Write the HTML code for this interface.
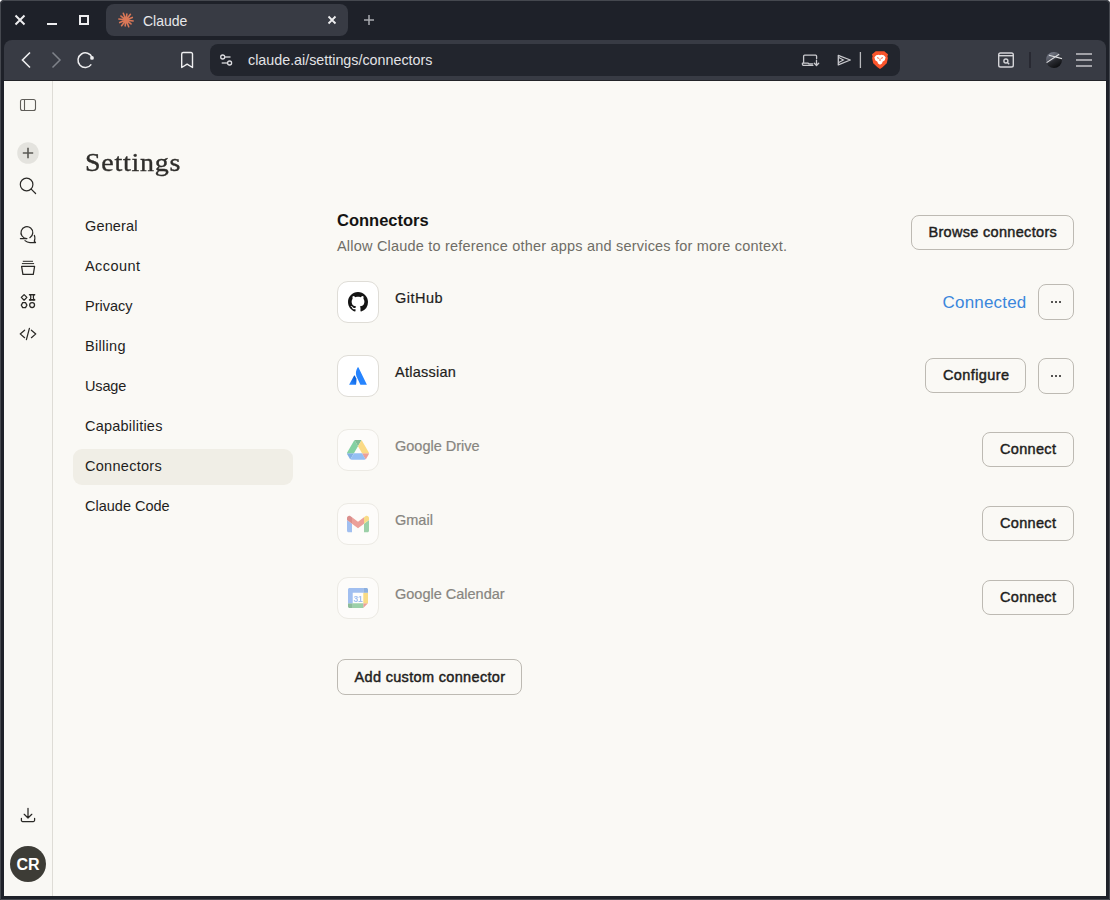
<!DOCTYPE html>
<html><head><meta charset="utf-8">
<style>
*{box-sizing:border-box;margin:0;padding:0}
html,body{width:1110px;height:900px;overflow:hidden;background:#ffffff;font-family:"Liberation Sans",sans-serif}
.a{position:absolute}
.t{position:absolute;white-space:nowrap;line-height:1}
#win{position:absolute;left:0;top:0;width:1110px;height:900px;background:#1e2129;border-radius:4px 4px 0 0;overflow:hidden}
#winb{position:absolute;left:0;top:0;width:1110px;height:900px;border:1px solid #45484f;border-radius:4px 4px 0 0}
#tab{position:absolute;left:106px;top:4px;width:242px;height:32px;background:#383b44;border-radius:8px}
#toolbar{position:absolute;left:4px;top:40px;width:1102px;height:40px;background:#383b44;border-radius:8px 8px 0 0}
#url{position:absolute;left:210px;top:44px;width:690px;height:32px;background:#22252d;border-radius:8px}
#content{position:absolute;left:4px;top:80px;width:1102px;height:816px;background:#faf9f5;overflow:hidden}
#side{position:absolute;left:0;top:0;width:49px;height:816px;background:#f9f8f4;border-right:1px solid #dedcd6}
.nav{position:absolute;left:81px;font-size:14.5px;color:#1f1e1d}
.btn{position:absolute;border:1px solid #bdbab3;border-radius:8px;font-size:14.5px;color:#1f1e1d;-webkit-text-stroke:0.45px #1f1e1d}
.btn span{position:absolute;white-space:nowrap;line-height:1}
.ico{position:absolute;left:333px;width:42px;height:42px;border:1px solid #dfddd7;border-radius:11px;background:#ffffff}
.ico.f{background:#fdfcfa;border-color:#eceae4}
.name{position:absolute;left:391px;font-size:14.5px;color:#1f1e1d;white-space:nowrap;line-height:1;-webkit-text-stroke:0.2px currentColor}
.dim{color:#878580}
.dots{position:absolute;left:11.8px;top:16.1px;width:11px;height:3px}
.dots i{position:absolute;top:0;width:2.2px;height:2.2px;background:#1f1e1d;border-radius:50%}
#ov{position:absolute;left:0;top:0;width:1110px;height:900px}
</style></head><body>
<div id="win">
  <div id="tab"></div>
  <div id="toolbar"></div>
  <div id="url"></div>
  <div class="t" style="left:143px;top:13.5px;font-size:14px;color:#e8e8ea">Claude</div>
  <div class="t" style="left:248px;top:53px;font-size:14.3px;color:#e3e3e6">claude.ai/settings/connectors</div>
</div>
<div id="content">
  <div id="side"></div>
  <div class="a" style="left:0;top:0;width:1102px;height:1px;background:#232428"></div>
  <div class="t" style="left:81px;top:70px;font-family:'Liberation Serif',serif;font-size:28px;letter-spacing:0.75px;-webkit-text-stroke:0.4px #2f2e2b;color:#2f2e2b;transform:scaleY(0.92);transform-origin:0 0">Settings</div>
  <div class="a" style="left:69px;top:369px;width:220px;height:36px;background:#f0eee6;border-radius:9px"></div>
  <div class="nav t" style="top:139px;letter-spacing:0.15px">General</div>
  <div class="nav t" style="top:179px;letter-spacing:0.45px">Account</div>
  <div class="nav t" style="top:219px">Privacy</div>
  <div class="nav t" style="top:259px;letter-spacing:0.3px">Billing</div>
  <div class="nav t" style="top:299px;letter-spacing:-0.15px">Usage</div>
  <div class="nav t" style="top:339px;letter-spacing:0.22px">Capabilities</div>
  <div class="nav t" style="top:379px;letter-spacing:0.28px">Connectors</div>
  <div class="nav t" style="top:419px">Claude Code</div>

  <div class="t" style="left:333px;top:132px;font-size:16.5px;font-weight:bold;color:#141413">Connectors</div>
  <div class="t" style="left:333px;top:159px;font-size:14.5px;color:#6f6d66;letter-spacing:0.2px">Allow Claude to reference other apps and services for more context.</div>
  <div class="btn" style="left:907px;top:135px;width:163px;height:35px"><span style="left:16.5px;top:8.5px;letter-spacing:0.31px">Browse connectors</span></div>

  <div class="ico" style="top:201px"></div>
  <div class="name" style="top:211px;letter-spacing:0.5px">GitHub</div>
  <div class="t" style="left:938.5px;top:213.5px;font-size:17px;letter-spacing:0.2px;color:#3a87dc">Connected</div>
  <div class="btn" style="left:1034px;top:204px;width:36px;height:36px"><div class="dots"><i style="left:0"></i><i style="left:4.2px"></i><i style="left:8.5px"></i></div></div>

  <div class="ico" style="top:275px"></div>
  <div class="name" style="top:285px;letter-spacing:0.25px">Atlassian</div>
  <div class="btn" style="left:921px;top:278px;width:101px;height:35px"><span style="left:17px;top:8.5px;letter-spacing:0.4px">Configure</span></div>
  <div class="btn" style="left:1034px;top:278px;width:36px;height:36px"><div class="dots"><i style="left:0"></i><i style="left:4.2px"></i><i style="left:8.5px"></i></div></div>

  <div class="ico f" style="top:349px"></div>
  <div class="name dim" style="top:359px">Google Drive</div>
  <div class="btn" style="left:978px;top:352px;width:92px;height:35px"><span style="left:17px;top:8.5px;letter-spacing:0.32px">Connect</span></div>

  <div class="ico f" style="top:423px"></div>
  <div class="name dim" style="top:433px">Gmail</div>
  <div class="btn" style="left:978px;top:426px;width:92px;height:35px"><span style="left:17px;top:8.5px;letter-spacing:0.32px">Connect</span></div>

  <div class="ico f" style="top:497px"></div>
  <div class="name dim" style="top:507px">Google Calendar</div>
  <div class="btn" style="left:978px;top:500px;width:92px;height:35px"><span style="left:17px;top:8.5px;letter-spacing:0.32px">Connect</span></div>

  <div class="btn" style="left:333px;top:579px;width:185px;height:36px"><span style="left:16.5px;top:9.5px;letter-spacing:0.33px">Add custom connector</span></div>
  <div class="a" style="left:6px;top:766px;width:36px;height:36px;border-radius:50%;background:#3d3c36"></div>
  <div class="t" style="left:12px;top:777px;width:24px;text-align:center;font-size:16px;font-weight:bold;color:#ffffff">CR</div>
</div>
<div id="winb"></div>
<svg id="ov" width="1110" height="900" viewBox="0 0 1110 900">
  <!-- window controls -->
  <g stroke="#eeeef0" stroke-width="2" fill="none">
    <path d="M15.5 15.5L24.5 24.5M24.5 15.5L15.5 24.5"/>
    <path d="M47 24L57 24"/>
    <rect x="80" y="16" width="8" height="8"/>
  </g>
  <!-- claude favicon -->
  <path stroke="#d97757" stroke-width="1.6" stroke-linecap="round" d="M127.49 20.21L133.13 21.00M127.18 20.92L131.04 23.94M126.56 21.39L128.70 26.68M125.79 21.49L125.16 25.94M125.08 21.18L121.57 25.67M124.61 20.56L119.70 22.55M124.51 19.79L118.87 19.00M124.82 19.08L120.96 16.06M125.44 18.61L123.30 13.32M126.21 18.51L126.84 14.06M126.92 18.82L130.43 14.33M127.39 19.44L132.30 17.45"/>
  <circle cx="126" cy="20" r="2.2" fill="#d97757"/>
  <!-- tab close / new tab -->
  <path d="M328.5 16.5L335.5 23.5M335.5 16.5L328.5 23.5" stroke="#eeeef0" stroke-width="1.8"/>
  <path d="M364 20L374 20M369 15L369 25" stroke="#a9abb0" stroke-width="1.5"/>
  <!-- nav -->
  <path d="M30 52.5L22.5 60L30 67.5" stroke="#eeeef0" stroke-width="1.6" fill="none"/>
  <path d="M52.5 52.5L60 60L52.5 67.5" stroke="#7f828a" stroke-width="1.5" fill="none"/>
  <path d="M92.16 57.7A7.3 7.3 0 1 0 91.28 64.39" stroke="#eeeef0" stroke-width="1.5" fill="none"/>
  <circle cx="92.0" cy="57.9" r="1.9" fill="#eeeef0"/>
  <!-- bookmark -->
  <path d="M181.7 54A1.5 1.5 0 0 1 183.2 52.5H191A1.5 1.5 0 0 1 192.5 54V67.5L187.1 64.2L181.7 67.5Z" stroke="#eeeef0" stroke-width="1.4" fill="none" stroke-linejoin="round"/>
  <!-- tune -->
  <g stroke="#dcdce0" stroke-width="1.3" fill="none">
    <circle cx="222.7" cy="57" r="2"/><path d="M224.9 57H230.5"/>
    <circle cx="229.6" cy="63" r="2"/><path d="M221.7 63H227.4"/>
  </g>
  <!-- install -->
  <g stroke="#c9c9cd" stroke-width="1.3" fill="none" stroke-linecap="round" stroke-linejoin="round">
    <path d="M803.6 62.6V56.2A1 1 0 0 1 804.6 55.2H815.6A1 1 0 0 1 816.6 56.2V58.4"/>
    <path d="M813 65.3H803.6A1.2 1.2 0 0 1 802.4 64.1V63.2H808.2L808.8 63.8H812.6"/>
    <path d="M816.5 60.2V65.4M814.3 63.3L816.5 65.5L818.7 63.3"/>
  </g>
  <!-- send -->
  <path d="M838.3 55.3L850.3 60L838.3 64.9Z" stroke="#c9c9cd" stroke-width="1.3" fill="none" stroke-linejoin="round"/>
  <path d="M838.8 57.6L843.4 60L838.8 62.5" stroke="#c9c9cd" stroke-width="1.1" fill="none"/>
  <path d="M860.4 52V68" stroke="#b8b8bc" stroke-width="1.3"/>
  <!-- brave lion -->
  <path d="M875.8 51.3H884.3L886.3 53L888 54.2L887.4 56.5L887.9 58L886.8 63.2L882.5 67.2L880 68.9L877.5 67.2L873.2 63.2L872.1 58L872.6 56.5L872 54.2L873.7 53Z" fill="#fb542b"/>
  <path d="M876.2 55.2L878.8 54.7L880 55.3L881.2 54.7L883.8 55.2L885.6 57.3L884.8 60.3L882.6 61.7L882 63.6L880 64.8L878 63.6L877.4 61.7L875.2 60.3L874.4 57.3Z" fill="#ffffff"/>
  <path d="M877 57.6L879 58.4M883 57.6L881 58.4M880 58.5V61" stroke="#fb542b" stroke-width="0.9"/>
  <!-- search tabs -->
  <g stroke="#d4d4d8" stroke-width="1.4" fill="none">
    <rect x="998.7" y="53" width="14.6" height="14" rx="1.8"/>
    <path d="M998.7 55.7H1013.3"/>
    <circle cx="1005.9" cy="61" r="2"/><path d="M1007.4 62.5L1009.2 64.2"/>
  </g>
  <path d="M1030 52V68" stroke="#23252c" stroke-width="1.5"/>
  <!-- globe avatar -->
  <defs>
    <linearGradient id="gl" x1="0.1" y1="0.1" x2="0.6" y2="1">
      <stop offset="0" stop-color="#7a7e8c"/><stop offset="0.42" stop-color="#50535d"/><stop offset="0.55" stop-color="#2a2c32"/><stop offset="1" stop-color="#0e0f12"/>
    </linearGradient>
  </defs>
  <circle cx="1054" cy="60" r="8" fill="url(#gl)"/>
  <path d="M1046.6 62.6L1059.1 54.3M1048.9 55.3L1062 58.6" stroke="#dcdde0" stroke-width="1.1"/>
  <!-- hamburger -->
  <path d="M1076 54H1092M1076 60H1092M1076 66H1092" stroke="#c3c4c8" stroke-width="1.7"/>

  <!-- sidebar icons -->
  <g stroke="#5f5d58" stroke-width="1.1" fill="none">
    <rect x="20.5" y="99.5" width="15" height="11" rx="2"/>
    <path d="M24.5 99.5V110.5"/>
  </g>
  <circle cx="28" cy="153" r="10.8" fill="#e4e3de"/>
  <path d="M22.8 153H33.2M28 147.8V158.2" stroke="#5a5954" stroke-width="1.6"/>
  <g stroke="#2a2926" stroke-width="1.2" fill="none" stroke-linecap="round">
    <circle cx="26.6" cy="184.5" r="6.3"/><path d="M31.2 189.1L35.6 193.5"/>
  </g>
  <g stroke="#2a2926" stroke-width="1.25" fill="none" stroke-linejoin="round" stroke-linecap="round">
    <path d="M20.4 238.5H26.9A5.9 5.9 0 1 1 29.85 237.7"/>
    <path d="M25 240.6C26.5 242 28 242.5 30 242.5H35.5L34.3 241.3C35 240 35 236.7 34.4 235.4"/>
    <path d="M23.2 261.3H32.6M22.3 263.6H33.7" stroke-width="1"/>
    <path d="M21.6 266.3H34.6L33.3 274.4H22.9Z"/>
    <path d="M24.1 294.6L26.9 297.4L24.1 300.2L21.3 297.4Z"/>
    <path d="M29.6 294.7H34.6M29.6 299.9H34.6" stroke-width="1.6"/><path d="M30.4 294.7C31.1 296.5 31.1 298.1 30.4 299.9M33.8 294.7C33.1 296.5 33.1 298.1 33.8 299.9"/>
    <path d="M22.7 302.6H25.5L26.9 305.1L25.5 307.6H22.7L21.3 305.1Z"/>
    <circle cx="32.1" cy="305.1" r="2.45"/>
    <path d="M24.6 330.2L20.2 333.9L24.6 337.7M31.4 330.2L35.8 333.9L31.4 337.7M29.4 328.4L26.4 339.6"/>
    <path d="M28 808.3V818M24.2 814.3L28 818L31.8 814.3M21.4 818.3V820.3A1.2 1.2 0 0 0 22.6 821.5H33.4A1.2 1.2 0 0 0 34.6 820.3V818.3"/>
  </g>

  <!-- github -->
  <g transform="translate(348 292) scale(1.25)">
    <path fill="#141414" d="M8 0C3.58 0 0 3.58 0 8c0 3.54 2.29 6.53 5.47 7.59.4.07.55-.17.55-.38 0-.19-.01-.82-.01-1.49-2.01.37-2.53-.49-2.69-.94-.09-.23-.48-.94-.82-1.13-.28-.15-.68-.52-.01-.53.63-.01 1.08.58 1.23.82.72 1.21 1.87.87 2.33.66.07-.52.28-.87.51-1.07-1.78-.2-3.64-.89-3.64-3.95 0-.87.31-1.59.82-2.15-.08-.2-.36-1.02.08-2.12 0 0 .67-.21 2.2.82.64-.18 1.32-.27 2-.27.68 0 1.36.09 2 .27 1.53-1.04 2.2-.82 2.2-.82.44 1.1.16 1.92.08 2.12.51.56.82 1.27.82 2.15 0 3.07-1.87 3.75-3.65 3.95.29.25.54.73.54 1.48 0 1.07-.01 1.93-.01 2.2 0 .21.15.46.55.38A8.013 8.013 0 0016 8c0-4.42-3.58-8-8-8z"/>
  </g>
  <!-- atlassian -->
  <defs>
    <linearGradient id="at" x1="0.9" y1="0" x2="0.3" y2="1">
      <stop offset="0" stop-color="#0052cc"/><stop offset="0.9" stop-color="#2684ff"/>
    </linearGradient>
  </defs>
  <path d="M354 375.8C354.3 375.4 354.8 375.5 355 375.9L356.2 378.3C356.6 379.6 356.6 381.5 356 384.8H349.1Z" fill="url(#at)"/>
  <path d="M357.6 367.6C357.8 367.2 358.3 367.2 358.5 367.6L366.9 384.8H360.4L356.4 376.2C355.5 373.5 355.8 370.5 357.6 367.6Z" fill="#2684ff"/>
  <!-- drive -->
  <g transform="translate(347 440) scale(0.252)" opacity="0.5" style="filter:saturate(0.9)">
    <path d="m6.6 66.85 3.85 6.65c.8 1.4 1.95 2.5 3.3 3.3l13.75-23.8h-27.5c0 1.55.4 3.1 1.2 4.5z" fill="#0066da"/>
    <path d="m43.65 25-13.75-23.8c-1.35.8-2.5 1.9-3.3 3.3l-25.4 44a9.06 9.06 0 0 0 -1.2 4.5h27.5z" fill="#00ac47"/>
    <path d="m73.55 76.8c1.35-.8 2.5-1.9 3.3-3.3l1.6-2.75 7.65-13.25c.8-1.4 1.2-2.95 1.2-4.5h-27.502l5.852 11.5z" fill="#ea4335"/>
    <path d="m43.65 25 13.75-23.8c-1.35-.8-2.9-1.2-4.5-1.2h-18.5c-1.6 0-3.15.45-4.5 1.2z" fill="#00832d"/>
    <path d="m59.8 53h-32.3l-13.75 23.8c1.35.8 2.9 1.2 4.5 1.2h50.8c1.6 0 3.15-.45 4.5-1.2z" fill="#2684fc"/>
    <path d="m73.4 26.5-12.7-22c-.8-1.4-1.95-2.5-3.3-3.3l-13.75 23.8 16.15 28h27.45c0-1.55-.4-3.1-1.2-4.5z" fill="#ffba00"/>
  </g>
  <!-- gmail -->
  <g transform="translate(347 515.8) scale(0.25) translate(-52 -42)" opacity="0.5" style="filter:saturate(0.9)">
    <path fill="#4285f4" d="M58 108h14V74L52 59v43c0 3.32 2.69 6 6 6"/>
    <path fill="#34a853" d="M120 108h14c3.32 0 6-2.69 6-6V59l-20 15"/>
    <path fill="#fbbc04" d="M120 48v26l20-15v-8c0-7.42-8.47-11.650-14.4-7.2"/>
    <path fill="#ea4335" d="M72 74V48l24 18 24-18v26L96 92"/>
    <path fill="#c5221f" d="M52 51v8l20 15V48l-5.6-4.2c-5.94-4.45-14.4-.22-14.4 7.2"/>
  </g>
  <!-- calendar -->
  <g transform="translate(348 588) scale(0.1)" opacity="0.5" style="filter:saturate(0.9)">
    <path fill="#fff" d="M152.632 47.368H47.368v105.263h105.264z"/>
    <path fill="#EA4335" d="M152.632 200L200 152.632h-47.368z"/>
    <path fill="#FBBC04" d="M200 47.368h-47.368v105.263H200z"/>
    <path fill="#34A853" d="M152.632 152.632H47.368V200h105.264z"/>
    <path fill="#188038" d="M0 152.632v31.579C0 192.934 7.066 200 15.789 200h31.579v-47.368z"/>
    <path fill="#1967D2" d="M200 47.368V15.789C200 7.066 192.934 0 184.211 0h-31.579v47.368z"/>
    <path fill="#4285F4" d="M152.632 0H15.789C7.066 0 0 7.066 0 15.789v136.842h47.368V47.368h105.264z"/>
    <text x="100" y="137" text-anchor="middle" font-family="Liberation Sans" font-weight="bold" font-size="86" letter-spacing="-4" fill="#4285F4">31</text>
  </g>
</svg>
</body></html>
